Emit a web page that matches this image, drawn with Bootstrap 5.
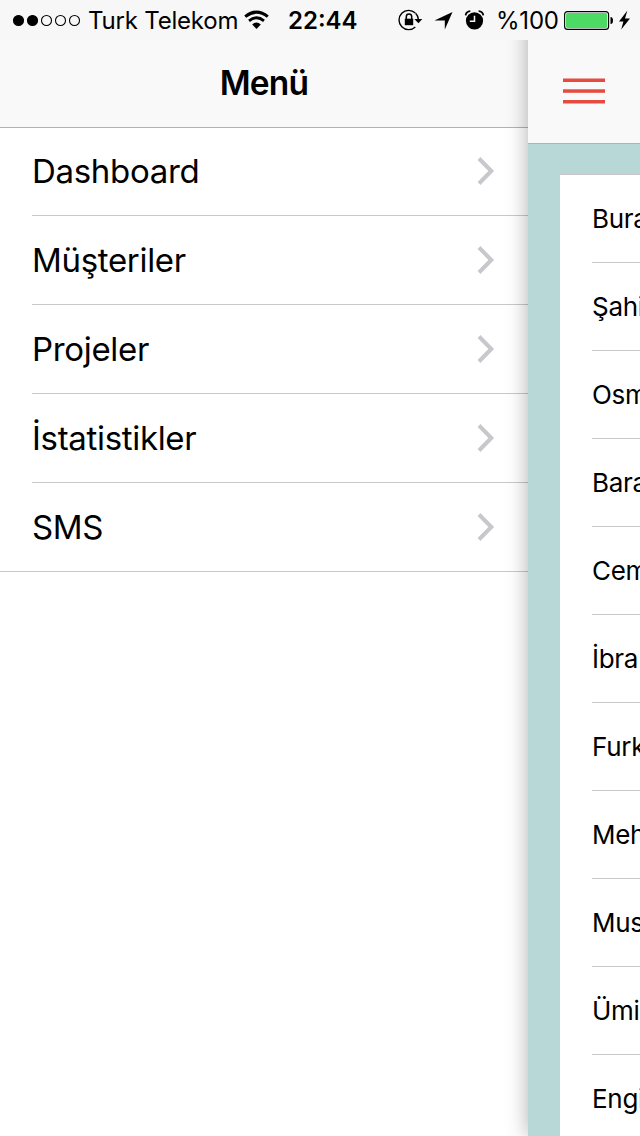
<!DOCTYPE html>
<html lang="tr">
<head>
<meta charset="utf-8">
<meta name="viewport" content="width=device-width, initial-scale=1">
<title>Menü</title>
<link href="https://cdn.jsdelivr.net/npm/bootstrap@5.3.0/dist/css/bootstrap.min.css" rel="stylesheet">
<style>
  body { font-family: Inter, "Liberation Sans", sans-serif; color: #000; }
  .screen { width: 640px; height: 1136px; }
  .status-bar { height: 40px; background: #f7f7f7; font-size: 24px; line-height: 40px; z-index: 3; }
  .status-bar svg { flex: none; display: block; }
  .status-bar span { flex: none; white-space: nowrap; line-height: 38px; padding-top: 2px; }
  .status-carrier { width: 164px; padding-left: 7px; letter-spacing: -.2px; }
  .status-time { width: 110px; padding-left: 19px; }
  .status-charge { width: 67px; padding-left: 11px; letter-spacing: -.2px; }
  .panes { height: 1136px; margin-top: -40px; }
  .menu-pane { width: 528px; padding-top: 40px; }
  .menu-title { height: 88px; background: #f9f9f9; border-bottom: 1px solid #b2b2b2; font-size: 33.5px; font-weight: 600; line-height: 86px; letter-spacing: -.8px; margin: 0; }
  .menu-list { border-bottom: 1px solid #c8c7cc; }
  .menu-list .list-group-item { height: 89px; padding: 0 32px 0 0; margin-left: 32px; border: 0; border-bottom: 1px solid #c8c7cc; font-size: 33px; line-height: 88px; letter-spacing: -.32px; color: #000; }
  .menu-list .list-group-item:first-child { height: 88px; line-height: 86px; padding-bottom: 1px; }
  .menu-list .list-group-item:last-child { height: 88px; border-bottom: 0; }
  .content-pane { width: 112px; padding-top: 40px; background: #b8d8d7; box-shadow: 0 0 20px rgba(0,0,0,.32); z-index: 2; }
  .content-head { height: 104px; background: #f9f9f9; border-bottom: 1px solid #b2b2b2; padding: 38px 0 0 35px; }
  .people { margin: 30px 0 0 32px; border-top: 1px solid #c8c7cc; background: #fff; height: 962px; }
  .people .list-group-item { flex: none; height: 88px; padding: 0; margin-left: 32px; border: 0; border-bottom: 1px solid #c8c7cc; font-size: 26px; line-height: 88px; letter-spacing: -.3px; color: #000; white-space: nowrap; }
</style>
</head>
<body class="m-0 bg-white overflow-hidden">
<div class="screen overflow-hidden">
  <header class="status-bar position-relative d-flex align-items-center">
    <svg width="81" height="40"><g transform="translate(13)" stroke="#000" stroke-width="1.1" fill="none"><circle cx="5.5" cy="20.5" r="5" fill="#000"/><circle cx="19.5" cy="20.5" r="5" fill="#000"/><circle cx="33.5" cy="20.5" r="5"/><circle cx="47.5" cy="20.5" r="5"/><circle cx="61.5" cy="20.5" r="5"/></g></svg>
    <span class="status-carrier">Turk Telekom</span>
    <svg width="24" height="40" viewBox="1 0 24 40" overflow="visible"><g fill="none" stroke="#000"><path d="M1.2 16.6Q12.5 7.6 23.8 16.6" stroke-width="3"/><path d="M5 20.8Q12.5 14.8 20 20.8" stroke-width="2.8"/></g><path d="M8.2 24.4Q12.5 20.8 16.8 24.4L12.5 29Z"/></svg>
    <span class="status-time fw-semibold">22:44</span>
    <svg class="ms-3" width="90" height="40" viewBox="-4 0 90 40">
      <path d="M16.3 13.1A9.6 9.6 0 1 0 16.3 26.9M16.6 13.2A9.6 9.6 0 0 1 19.4 19.5" fill="none" stroke="#000" stroke-width="1.4"/>
      <path d="M15.4 19H23.3L19.4 23.3Z"/><path d="M5.8 18.7H14.2V25.2H5.8Z"/><path d="M7.3 19V16.8a2.7 2.7 0 0 1 5.4 0V19" fill="none" stroke="#000" stroke-width="1.5"/>
      <path d="M53.5 12L45.8 29.5V20.5H35.5Z"/>
      <circle cx="75.5" cy="20.8" r="8.6"/><path d="M66.6 15.3Q67.2 11.5 71.3 11.2M84.3 15.3Q83.8 11.5 79.6 11.2" fill="none" stroke="#000" stroke-width="1.8"/><path d="M75.5 15.7V21.2H70.8" fill="none" stroke="#f7f7f7" stroke-width="1.5"/>
    </svg>
    <span class="status-charge">%100</span>
    <svg width="76" height="40" viewBox="-10 0 76 40" overflow="visible"><rect x="2.6" y="11.6" width="44" height="17.8" rx="3" fill="none" stroke="#000" stroke-width="1.1"/><rect x="4" y="13" width="41.2" height="15" rx="1.8" fill="#4cd964"/><path d="M48.5 17Q51 17 51 20.5T48.5 24Z"/><path d="M65.4 10.5L57 21.5H61.4L59.2 29.6L68 18.6H63Z"/></svg>
  </header>

  <div class="panes d-flex">
    <nav class="menu-pane flex-shrink-0">
      <h1 class="menu-title text-center">Menü</h1>
      <div class="menu-list list-group list-group-flush" id="menu"></div>
    </nav>
    <main class="content-pane position-relative flex-shrink-0">
      <div class="content-head">
        <svg class="d-block" width="42" height="26"><g fill="#e64b3f"><rect y=".5" width="42" height="3.5"/><rect y="11.3" width="42" height="3.5"/><rect y="22" width="42" height="3.5"/></g></svg>
      </div>
      <div class="people list-group list-group-flush rounded-0" id="people"></div>
    </main>
  </div>
</div>
<script src="https://cdn.jsdelivr.net/npm/bootstrap@5.3.0/dist/js/bootstrap.bundle.min.js"></script>
<script>
  const chevron = '<svg width="20" height="30" viewBox="0 0 20 30"><path d="M3 2.5L15.3 15L3 27.5" fill="none" stroke="#c7c7cc" stroke-width="4"/></svg>';
  document.getElementById('menu').innerHTML = ['Dashboard', 'Müşteriler', 'Projeler', 'İstatistikler', 'SMS']
    .map(t => `<a class="list-group-item d-flex align-items-center justify-content-between"><span>${t}</span>${chevron}</a>`).join('');
  document.getElementById('people').innerHTML = ['Bura', 'Şahi', 'Osm', 'Bara', 'Cem', 'İbra', 'Furk', 'Meh', 'Mus', 'Ümi', 'Engi']
    .map(t => `<div class="list-group-item">${t}</div>`).join('');
</script>
</body>
</html>
